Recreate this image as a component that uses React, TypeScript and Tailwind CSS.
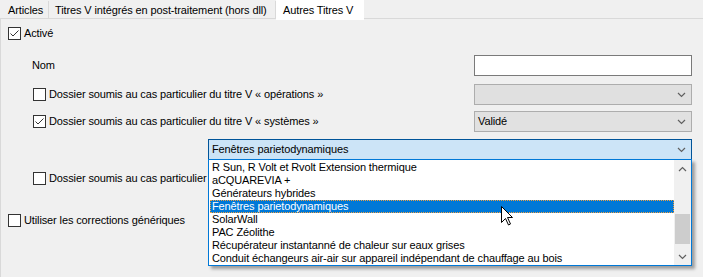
const font = "font-['Liberation_Sans',Arial,sans-serif]";

function Check({ checked }: { checked?: boolean }) {
  return (
    <span className="flex h-[13px] w-[13px] shrink-0 items-center justify-center border border-[#333] bg-white">
      {checked && (
        <svg width="11" height="11" viewBox="0 0 11 11">
          <path d="M1.5 5.5 L4 8 L9.5 2.5" fill="none" stroke="#333" strokeWidth="1" />
        </svg>
      )}
    </span>
  );
}

function Chevron({ up, color = "#606060" }: { up?: boolean; color?: string }) {
  return (
    <svg width="9" height="6" viewBox="0 0 9 6">
      <path d={up ? "M1 5 L4.5 1.5 L8 5" : "M1 1 L4.5 4.5 L8 1"} fill="none" stroke={color} strokeWidth="1.2" />
    </svg>
  );
}

const items = [
  "R Sun, R Volt et Rvolt Extension thermique",
  "aCQUAREVIA +",
  "Générateurs hybrides",
  "Fenêtres parietodynamiques",
  "SolarWall",
  "PAC Zéolithe",
  "Récupérateur instantanné de chaleur sur eaux grises",
  "Conduit échangeurs air-air sur appareil indépendant de chauffage au bois",
];

export default function App() {
  return (
    <div className={`relative h-[277px] w-[703px] overflow-hidden bg-[#f0f0f0] text-[11px] leading-[13px] tracking-[-0.12px] text-black ${font}`}>
      {/* tabs */}
      <div className="flex h-[19px] border-b border-[#d9d9d9]">
        <div className="mt-[1px] flex h-[18px] w-[49px] items-center border-r border-[#d9d9d9] pl-[8px]">Articles</div>
        <div className="mt-[1px] flex h-[18px] w-[227px] items-center border-r border-[#d9d9d9] pl-[6px]">
          Titres V intégrés en post-traitement (hors dll)
        </div>
        <div className="-mb-px flex h-[20px] w-[88px] items-center bg-white pl-[7px]">Autres Titres V</div>
      </div>

      {/* page */}
      <div className="flex h-[258px] flex-col border-l border-[#d9d9d9] pr-[11px]">
        <label className="mt-[8px] ml-[7px] flex items-center gap-[3px]">
          <Check checked />
          <span>Activé</span>
        </label>

        <div className="mt-[15px] flex h-[21px] items-center justify-between pl-[31px]">
          <span>Nom</span>
          <div className="h-[21px] w-[218px] border border-[#7a7a7a] bg-white" />
        </div>

        <div className="mt-[8px] flex h-[21px] items-center justify-between pl-[32px]">
          <label className="flex items-center gap-[3px]">
            <Check />
            <span>Dossier soumis au cas particulier du titre V « opérations »</span>
          </label>
          <div className="flex h-[21px] w-[218px] items-center justify-end border border-[#adadad] bg-[#e0e0e0] pr-[5px]">
            <Chevron />
          </div>
        </div>

        <div className="mt-[6px] flex h-[21px] items-center justify-between pl-[32px]">
          <label className="flex items-center gap-[3px]">
            <Check checked />
            <span>Dossier soumis au cas particulier du titre V « systèmes »</span>
          </label>
          <div className="flex h-[21px] w-[218px] items-center justify-between border border-[#adadad] bg-[#e1e1e1] pr-[5px] pl-[3px]">
            <span>Validé</span>
            <Chevron />
          </div>
        </div>

        <div className="mt-[7px] ml-[207px] flex h-[21px] items-center justify-between border border-[#005499] bg-[#cce4f7] pr-[5px] pl-[3px]">
          <span>Fenêtres parietodynamiques</span>
          <Chevron />
        </div>

        <label className="mt-[12px] ml-[32px] flex items-center gap-[3px]">
          <Check />
          <span className="w-[158px] overflow-hidden whitespace-nowrap">Dossier soumis au cas particulier d</span>
        </label>

        <label className="mt-[29px] ml-[7px] flex items-center gap-[3px]">
          <Check />
          <span>Utiliser les corrections génériques</span>
        </label>
      </div>

      {/* open list */}
      <div className="absolute top-[159px] left-[208px] flex w-[484px] border border-[#0078d7] bg-white shadow-[3px_3px_3px_rgba(0,0,0,0.35)]">
        <div className="flex-1 pt-[1px] pl-[1px]">
          {items.map((t, i) =>
            i === 3 ? (
              <div key={t} className="h-[13px] border border-dotted border-[#f0a040] bg-[#0078d7] pl-[1px] leading-[11px] whitespace-nowrap text-white">
                {t}
              </div>
            ) : (
              <div key={t} className="h-[13px] pl-[2px] whitespace-nowrap">
                {t}
              </div>
            )
          )}
        </div>
        <div className="flex w-[17px] flex-col items-center bg-[#f0f0f0]">
          <div className="flex h-[17px] items-center">
            <Chevron up />
          </div>
          <div className="mt-[37px] h-[30px] w-[15px] bg-[#cdcdcd]" />
          <div className="mt-auto flex h-[17px] items-center">
            <Chevron />
          </div>
        </div>
      </div>

      {/* mouse cursor */}
      <svg className="absolute top-[206px] left-[501px]" width="13" height="20" viewBox="0 0 13 20">
        <path d="M0.5 0.5 L0.5 16.5 L4.5 12.5 L7.5 19 L9.5 18 L6.5 11.5 L11.5 11.5 Z" fill="white" stroke="black" strokeWidth="1" />
      </svg>
    </div>
  );
}
